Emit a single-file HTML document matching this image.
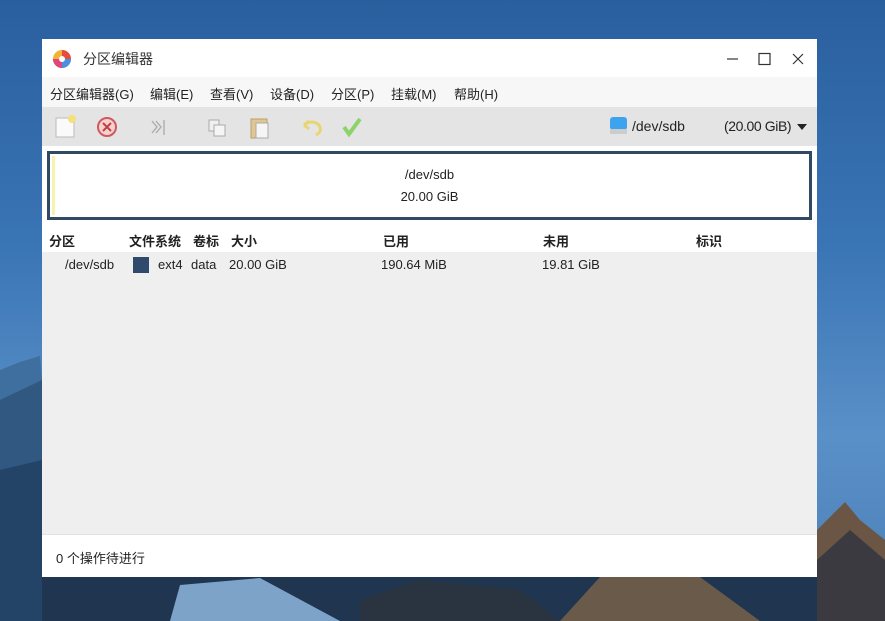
<!DOCTYPE html>
<html><head><meta charset="utf-8"><style>
*{margin:0;padding:0;box-sizing:border-box}
body{width:885px;height:621px;overflow:hidden;position:relative;font-family:"Liberation Sans","Noto Sans CJK SC",sans-serif;font-size:13px;color:#222;background:linear-gradient(180deg,#2a5f9e 0%,#3a75b5 40%,#5a90c8 70%,#4a7fb5 100%)}
.bg{position:absolute;left:0;top:0}
.win{position:absolute;left:42px;top:39px;width:775px;height:538px;background:#efefef}
.title{position:absolute;left:0;top:0;width:775px;height:38px;background:#fff}
.menu{position:absolute;left:0;top:38px;width:775px;height:30px;background:#f7f7f7}
.menu span{position:absolute;top:7px;font-size:13px}
.tb{position:absolute;left:0;top:68px;width:775px;height:39px;background:#e4e4e4}
.disk{position:absolute;left:0;top:107px;width:775px;height:80px;background:#fff}
.box{position:absolute;left:5px;top:5px;width:765px;height:69px;border:3px solid #2f4a62}
.hdr{position:absolute;left:0;top:187px;width:775px;height:26px;background:#fff;font-weight:bold}
.t{position:absolute;white-space:nowrap}
.status{position:absolute;left:0;top:495px;width:775px;height:43px;background:#fff;border-top:1px solid #e2e2e2}
</style></head><body>
<svg class="bg" width="885" height="621">
<polygon points="0,370 20,362 40,356 42,380 42,621 0,621" fill="#3f6f9e"/>
<polygon points="0,400 42,380 42,621 0,621" fill="#2b4e75" opacity=".7"/>
<polygon points="0,470 42,460 42,621 0,621" fill="#1e3a5c" opacity=".7"/>
<polygon points="42,577 817,577 817,621 42,621" fill="#1f3550"/>
<polygon points="180,585 260,578 340,621 170,621" fill="#7ea3c8"/>
<polygon points="360,600 420,580 520,590 560,621 360,621" fill="#2a3440"/>
<polygon points="560,621 600,577 700,577 760,621" fill="#6a5a4a"/>
<polygon points="817,530 845,502 860,520 885,540 885,621 817,621" fill="#6b5646"/>
<polygon points="817,560 850,530 885,560 885,621 817,621" fill="#3a3a40"/>
</svg>
<div class="win">
<div class="title">
<svg style="position:absolute;left:10px;top:10px" width="20" height="20" viewBox="0 0 20 20"><circle cx="10" cy="10" r="9" fill="#f2b233"/><path d="M10 10L10 1A9 9 0 0 1 19 10Z" fill="#e84c3d"/><path d="M10 10L19 10A9 9 0 0 1 10 19Z" fill="#4a90e2"/><path d="M10 10L10 19A9 9 0 0 1 1 10Z" fill="#e0457b"/><circle cx="10" cy="10" r="3" fill="#fff"/></svg>
<span class="t" style="left:41px;top:10px;font-size:14px;color:#333">分区编辑器</span>
<svg style="position:absolute;left:680px;top:12px" width="100" height="16"><line x1="5" y1="8" x2="16" y2="8" stroke="#333" stroke-width="1.2"/><rect x="37" y="2.5" width="11" height="11" fill="none" stroke="#333" stroke-width="1.2"/><path d="M71 3L81 13M81 3L71 13" stroke="#333" stroke-width="1.2"/></svg>
</div>
<div class="menu">
<span style="left:8px">分区编辑器(G)</span><span style="left:108px">编辑(E)</span><span style="left:168px">查看(V)</span><span style="left:228px">设备(D)</span><span style="left:289px">分区(P)</span><span style="left:349px">挂载(M)</span><span style="left:412px">帮助(H)</span>
</div>
<div class="tb">
<svg width="775" height="39">
<rect x="14" y="11" width="18" height="19" fill="#fafafa" stroke="#bbb"/><circle cx="30" cy="12" r="4" fill="#f5e07a"/>
<circle cx="65" cy="20" r="9" fill="#f5d0d0" stroke="#d05a5a" stroke-width="2"/><path d="M61 16L69 24M69 16L61 24" stroke="#c04040" stroke-width="2"/>
<path d="M110 14L115 20L110 26M114 14L119 20L114 26M122 13V28" stroke="#aaa" fill="none" stroke-width="1.3"/>
<rect x="167" y="13" width="10" height="11" fill="#f0f0f0" stroke="#aaa"/><rect x="172" y="18" width="11" height="11" fill="#f5f5f5" stroke="#aaa"/>
<rect x="209" y="12" width="16" height="19" fill="#e0c690" stroke="#b9a070"/><rect x="214" y="16" width="12" height="15" fill="#f5f5f5" stroke="#aaa"/>
<path d="M262 18Q270 12 277 18Q281 24 274 28M262 18L267 14M262 18L267 22" stroke="#e8d570" stroke-width="3" fill="none"/>
<path d="M302 20L307 27L318 12" stroke="#8cd36a" stroke-width="4" fill="none"/>
<rect x="563" y="0" width="212" height="39" fill="#e4e4e4"/>
<rect x="568" y="10" width="17" height="13" rx="3" fill="#3ea3ee"/><rect x="568" y="22" width="17" height="5" fill="#ccc"/>
</svg>
<span class="t" style="left:590px;top:11px;font-size:14px">/dev/sdb</span>
<span class="t" style="left:682px;top:11px;font-size:14px;letter-spacing:-0.4px">(20.00 GiB)</span>
<svg style="position:absolute;left:755px;top:17px" width="10" height="6"><path d="M0 0H10L5 6Z" fill="#222"/></svg>
</div>
<div class="disk"><div class="box"><div style="position:absolute;left:2px;top:2px;width:3px;height:59px;background:#f5f3b0"></div>
<span class="t" style="left:0;width:759px;text-align:center;top:13px">/dev/sdb</span>
<span class="t" style="left:0;width:759px;text-align:center;top:35px">20.00 GiB</span></div></div>
<div class="hdr"><span class="t" style="left:7px;top:5px">分区</span><span class="t" style="left:87px;top:5px">文件系统</span><span class="t" style="left:151px;top:5px">卷标</span><span class="t" style="left:189px;top:5px">大小</span><span class="t" style="left:341px;top:5px">已用</span><span class="t" style="left:501px;top:5px">未用</span><span class="t" style="left:654px;top:5px">标识</span></div>
<span class="t" style="left:23px;top:218px">/dev/sdb</span>
<div style="position:absolute;left:91px;top:218px;width:16px;height:16px;background:#2f4a6b"></div>
<span class="t" style="left:116px;top:218px">ext4</span><span class="t" style="left:149px;top:218px">data</span><span class="t" style="left:187px;top:218px">20.00 GiB</span><span class="t" style="left:339px;top:218px">190.64 MiB</span><span class="t" style="left:500px;top:218px">19.81 GiB</span>
<div class="status"><span class="t" style="left:14px;top:13px">0 个操作待进行</span></div>
</div>
</body></html>
